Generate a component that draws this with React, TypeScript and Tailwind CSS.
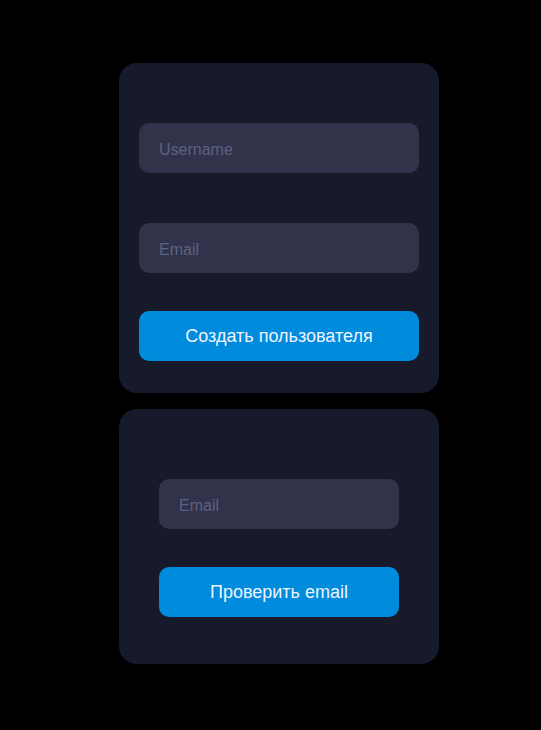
export default function App() {
  return (
    <div className="min-h-[730px] bg-black pt-[63px] font-['Liberation_Sans',Arial,sans-serif]">
      <div className="ml-[119px] flex w-[320px] flex-col gap-4">
        {/* Create user */}
        <div className="flex flex-col rounded-[18px] bg-[#161a2b] px-5 pt-[60px] pb-8">
          <input
            placeholder="Username"
            className="h-[50px] w-full rounded-[10px] bg-[#30334a] px-5 pt-[4px] text-base text-white outline-none placeholder:text-[#5e6181]"
          />
          <input
            placeholder="Email"
            className="mt-[50px] h-[50px] w-full rounded-[10px] bg-[#30334a] px-5 pt-[4px] text-base text-white outline-none placeholder:text-[#5e6181]"
          />
          <button className="mt-[38px] h-[50px] w-full rounded-[10px] bg-[#008bdd] text-[18px] text-[#eef4ff]">
            Создать пользователя
          </button>
        </div>

        {/* Check email */}
        <div className="flex flex-col rounded-[18px] bg-[#161a2b] px-10 pt-[70px] pb-[47px]">
          <input
            placeholder="Email"
            className="h-[50px] w-full rounded-[10px] bg-[#30334a] px-5 pt-[4px] text-base text-white outline-none placeholder:text-[#5e6181]"
          />
          <button className="mt-[38px] h-[50px] w-full rounded-[10px] bg-[#008bdd] text-[18px] text-[#eef4ff]">
            Проверить email
          </button>
        </div>
      </div>
    </div>
  );
}
